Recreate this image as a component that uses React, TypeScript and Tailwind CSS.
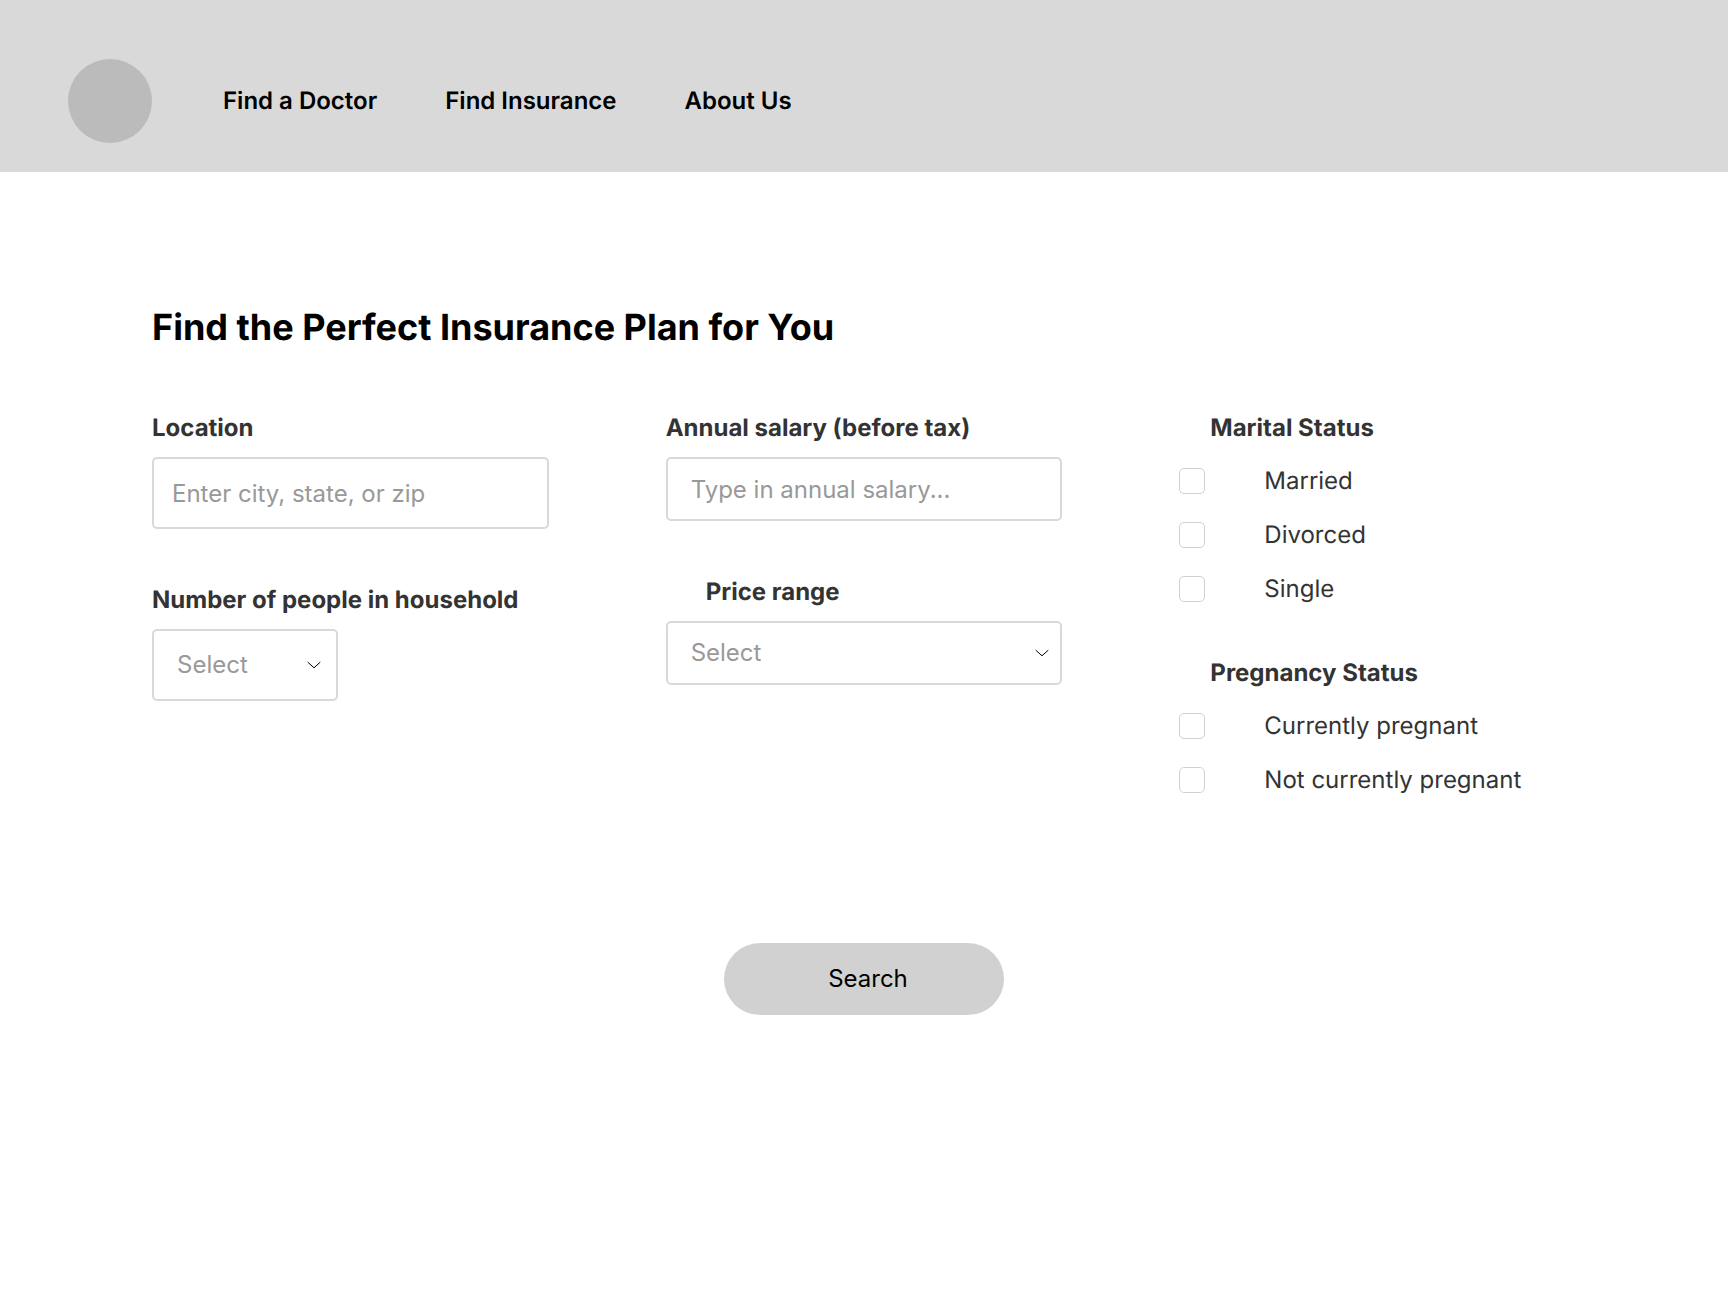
import React from "react";

const NAV_LINKS = ["Find a Doctor", "Find Insurance", "About Us"];

const boxClass =
  "block w-full rounded-[5px] border-2 border-[#d9d9d9] bg-white text-2xl placeholder:text-[#999999] placeholder:opacity-100";

function Field({
  id,
  label,
  indent = false,
  children,
}: {
  id: string;
  label: string;
  indent?: boolean;
  children: React.ReactNode;
}) {
  return (
    <div className="flex flex-col gap-3.5">
      <label
        htmlFor={id}
        className={`whitespace-nowrap text-2xl leading-[30px] font-bold ${indent ? "pl-10" : ""}`}
      >
        {label}
      </label>
      {children}
    </div>
  );
}

function SelectBox({
  id,
  options,
  className,
  chevronClassName,
}: {
  id: string;
  options: string[];
  className: string;
  chevronClassName: string;
}) {
  return (
    <div className={`relative ${className}`}>
      <select
        id={id}
        defaultValue=""
        className={`${boxClass} h-full appearance-none pr-12 pl-[23px] text-[#999999]`}
      >
        <option value="">Select</option>
        {options.map((option) => (
          <option key={option}>{option}</option>
        ))}
      </select>
      <svg
        viewBox="0 0 14 8"
        fill="none"
        stroke="#000000"
        strokeWidth="1"
        strokeLinecap="round"
        strokeLinejoin="round"
        aria-hidden="true"
        className={`pointer-events-none absolute inset-y-0 my-auto h-2 w-3.5 ${chevronClassName}`}
      >
        <path d="M1 1.4 7 6.8 13 1.4" />
      </svg>
    </div>
  );
}

function CheckGroup({ title, options }: { title: string; options: string[] }) {
  return (
    <fieldset>
      <legend className="mb-[23px] pl-[31px] text-2xl leading-[30px] font-bold">{title}</legend>
      <div className="flex flex-col gap-6">
        {options.map((option) => (
          <label key={option} className="flex items-center gap-[59px] text-2xl leading-[30px] whitespace-nowrap">
            <input
              type="checkbox"
              className="size-[26px] shrink-0 appearance-none rounded-[5px] border border-[#d1d1d1] bg-white checked:bg-[#bbbbbb]"
            />
            {option}
          </label>
        ))}
      </div>
    </fieldset>
  );
}

export default function App() {
  return (
    <div className="min-h-screen bg-white font-['Inter',sans-serif] text-[#333333] [text-rendering:geometricPrecision]">
      <header className="flex items-center gap-[71px] bg-[#d9d9d9] px-[68px] pt-[59px] pb-[29px]">
        <a href="#home" aria-label="Home" className="size-[84px] rounded-full bg-[#bbbbbb]" />
        <nav className="flex gap-[68px] text-2xl font-semibold text-black">
          {NAV_LINKS.map((link) => (
            <a key={link} href="#">
              {link}
            </a>
          ))}
        </nav>
      </header>

      <main className="px-[152px] pt-[133px] pb-20">
        <h1 className="mb-16 text-4xl leading-[44px] font-bold text-black">
          Find the Perfect Insurance Plan for You
        </h1>
        <form onSubmit={(event) => event.preventDefault()}>
          <div className="grid grid-cols-3 gap-x-[117px]">
            <div className="flex flex-col gap-14">
              <Field id="location" label="Location">
                <input
                  id="location"
                  type="text"
                  placeholder="Enter city, state, or zip"
                  className={`${boxClass} h-18 px-[18px]`}
                />
              </Field>
              <Field id="household" label="Number of people in household">
                <SelectBox
                  id="household"
                  options={["1", "2", "3", "4", "5+"]}
                  className="h-18 w-[186px]"
                  chevronClassName="right-[17px]"
                />
              </Field>
            </div>

            <div className="flex flex-col gap-14">
              <Field id="salary" label="Annual salary (before tax)">
                <input
                  id="salary"
                  type="text"
                  placeholder="Type in annual salary..."
                  className={`${boxClass} h-16 px-[23px]`}
                />
              </Field>
              <Field id="price" label="Price range" indent>
                <SelectBox
                  id="price"
                  options={["Under $200", "$200 – $400", "Over $400"]}
                  className="h-16"
                  chevronClassName="right-[13px]"
                />
              </Field>
            </div>

            <div className="flex flex-col gap-[54px]">
              <CheckGroup title="Marital Status" options={["Married", "Divorced", "Single"]} />
              <CheckGroup
                title="Pregnancy Status"
                options={["Currently pregnant", "Not currently pregnant"]}
              />
            </div>
          </div>

          <button
            type="submit"
            className="mx-auto mt-[148px] block h-18 w-[280px] rounded-full bg-[#d1d1d1] pl-2 text-2xl text-black"
          >
            Search
          </button>
        </form>
      </main>
    </div>
  );
}
